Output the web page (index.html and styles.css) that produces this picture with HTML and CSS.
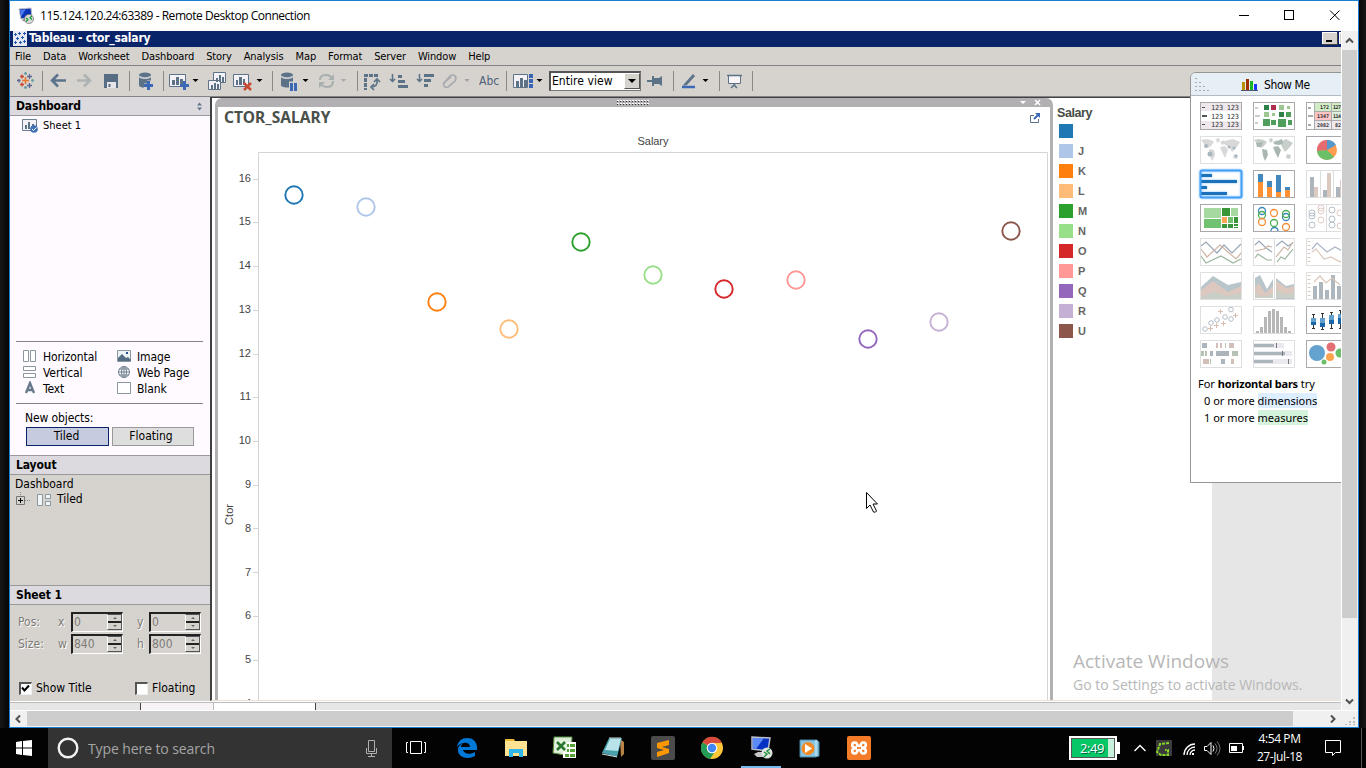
FILE: index.html
```html
<!DOCTYPE html>
<html lang="en">
<head>
<meta charset="utf-8">
<title>Remote Desktop Connection</title>
<link rel="stylesheet" href="styles.css">
</head>
<body>
<main class="desktop">
<section class="window">
  <header class="titlebar">
    <svg width="18" height="18" viewBox="18 6 18 18"><path d="M19 8l12-1 1 9-11 2z" fill="#0a32b4" stroke="#b8bcc4"/><path d="M20 9l6-1-5 8z" fill="#4a79ee"/><path d="M23 18l6 0 2 3-9-1z" fill="#999"/><circle cx="29" cy="18" r="4.600" fill="#d5d8d5" stroke="#777" stroke-width=".7"/><path d="M26 17l2 1.500-2 2M32 15l-2 1.500 2 2" stroke="#169a32" fill="none" stroke-width="1.200"/></svg>
    <h1>115.124.120.24:63389 - Remote Desktop Connection</h1>
    <svg class="winctl" width="110" height="30" viewBox="1235 1 110 30" fill="none" stroke="#000"><path d="M1239 15.500h10"/><rect x="1284.500" y="10.500" width="9" height="9"/><path d="M1330 10.500l9.500 9.500M1339.500 10.500l-9.500 9.500"/></svg>
  </header>
  <div class="viewport">
  <div class="session">
    <div class="apptitle">
      <svg width="16" height="16" viewBox="0 0 16 16"><path fill="#e8e8f4" d="M1 0h14v15H1z"/><path stroke="#245ab0" d="M2 3.500h3M3.500 2v3M6 2.500h3M7.500 1v3M11 2.500h3M12.500 1v3M4 7.500h3M5.500 6v3M9 6.500h3M10.500 5v3M2 11.500h3M3.500 10v3M7 11.500h3M8.500 10v3M11 10.500h3M12.500 9v3"/></svg>
      <b>Tableau - ctor_salary</b>
      <svg class="appmin" width="20" height="16" viewBox="1321 31 20 16"><path fill="#fff" d="M1322 32h15v12h-15zM1339 32h2v12h-2z"/><path fill="#404040" d="M1323 33h15v12h-16v-1h15z"/><path fill="#d6d3ce" d="M1323 33h14v11h-14zM1340 33h1v11h-1z"/><path fill="#000" d="M1326 40h6v2h-6z"/></svg>
    </div>
    <nav class="menu"><span>File</span><span>Data</span><span>Worksheet</span><span>Dashboard</span><span>Story</span><span>Analysis</span><span>Map</span><span>Format</span><span>Server</span><span>Window</span><span>Help</span></nav>
    <div class="toolbar">
      <svg class="sep" width="33" height="30" viewBox="10 66 33 30" fill="none" stroke-width="1.300"><path stroke="#e8762b" stroke-width="1.600" d="M22 80.500h7M25.500 77v7"/><path stroke="#c84830" d="M20 76.500h4M22 74.500v4M20 84.500h4M22 82.500v4"/><path stroke="#5c6692" d="M27 76.500h5M29.500 74v5M27 85.500h5M29.500 83v5M17 80.500h3.500M19 79v3.500"/><path stroke="#6a9ca4" d="M24 73.500h3M25.500 72v3M24 87.500h3M25.500 86v3M31 80.500h3M32.500 79v3"/></svg>
      <svg class="sep" width="87" height="30" viewBox="43 66 87 30"><path d="M58 74.500l-6 6 6 6M53 80.500h13" fill="none" stroke="#5b738c" stroke-width="2.500"/><path d="M84 74.500l6 6-6 6M77 80.500h13" fill="none" stroke="#adb2b2" stroke-width="2.500"/><path fill="#566d84" d="M104 74h14v14h-14z"/><path fill="#e8e5e8" d="M107 82h9v6h-9z"/><path fill="#566d84" d="M108.500 84h2v3h-2z"/></svg>
      <svg class="sep" width="34" height="30" viewBox="130 66 34 30"><g fill="#5c7287"><ellipse cx="145" cy="75" rx="6" ry="2.500"/><path d="M139 77.500q6 3 12 0v3h-4v3h-3v4q-4 0-5-2z"/></g><path d="M139 76.500q6 3 12 0" stroke="#bec5ce" fill="none"/><path d="M144 85.500h9M148.500 81v9" stroke="#3b69b5" stroke-width="3"/></svg>
      <svg class="sep" width="109" height="30" viewBox="164 66 109 30"><path d="M169.500 74.500h16v12h-16z" fill="#f5f2f7" stroke="#5d7389"/><path fill="#5c7287" d="M172 80h3v5h-3zM176 77h3v8h-3zM180 79h3v6h-3z"/><path d="M180 85.500h9M184.500 81v9" stroke="#3b69b5" stroke-width="3"/><path d="M192.500 79h6l-3 3z"/><g fill="#f5f2f7" stroke="#5d7389"><path d="M213.500 72.500h12v10h-12z"/><path d="M208.500 80.500h12v9h-12z"/></g><path fill="#5c7287" d="M216 78h2v4h-2zM219 75h2v7h-2zM222 77h2v5h-2zM211 85h2v4h-2zM214 83h2v6h-2zM217 84h2v5h-2z"/><path d="M233.500 74.500h15v12h-15z" fill="#f5f2f7" stroke="#5d7389"/><path fill="#5c7287" d="M236 80h2v5h-2zM239 77h3v8h-3zM243 79h2v6h-2z"/><path d="M244 83l7 7M251 83l-7 7" stroke="#c84b33" stroke-width="2.500"/><path d="M256.500 79h6l-3 3z"/></svg>
      <svg class="sep" width="85" height="30" viewBox="273 66 85 30"><g fill="#5c7287"><ellipse cx="287" cy="75" rx="6" ry="2.500"/><path d="M281 77.500q6 3 12 0v4h-4v6q-7 0-8-2z"/></g><path d="M281 76.500q6 3 12 0" stroke="#bec5ce" fill="none"/><path fill="#3b69b5" d="M290 83h3v8h-3zM294 83h3v8h-3z"/><path d="M302.500 79h6l-3 3z"/><path d="M320 80q0-5 6-5 4 0 6 3M333 81q0 6-6 6-4 0-6-3" stroke="#aaafb0" stroke-width="2.200" fill="none"/><path fill="#aaafb0" d="M334 74v6h-6zM319 88v-6h6zM340.500 79h6l-3 3z"/></svg>
      <svg width="121" height="30" viewBox="358 66 121 30"><g fill="none" stroke="#5c7287"><path d="M364 75.500h15M365.500 78v12" stroke-width="3" stroke-dasharray="4 1"/><path d="M371 87q7 0 6-7M374 82l3-3 3 3M374 84l-3 3 3 3" stroke-width="1.700"/><path d="M392.500 74v7M390 79l2.500 2.500 2.500-2.500M419.500 74v7M417 79l2.500 2.500 2.500-2.500" stroke-width="1.500"/></g><path fill="#5c7287" d="M398 75h4v3h-4zM398 80h7v3h-7zM398 85h10v3h-10zM424 74h10v3h-10zM424 79h7v3h-7zM424 84h4v3h-4z"/><path d="M443 84l7-8q3-2 5 0t0 5l-7 6q-3 1-4-1t1-4l6-5" stroke="#a5a9ad" stroke-width="1.600" fill="none"/><path d="M464.500 79h5l-2.500 3z" fill="#9da0a2"/></svg>
      <span class="abc sep">Abc</span>
      <svg width="42" height="30" viewBox="507 66 42 30"><path d="M513.500 74.500h14v13h-14z" fill="#f5f2f7" stroke="#5d7389"/><path fill="#5c7287" d="M516 81h3v6h-3zM520 78h3v9h-3zM524 80h3v7h-3z"/><path d="M531 74v15" stroke="#3866b4" stroke-width="4" stroke-dasharray="4 1"/><path d="M536.500 79h6l-3 3z"/></svg>
      <span class="select"><span>Entire view</span><i></i></span>
      <svg class="sep" width="33" height="30" viewBox="641 66 33 30"><path fill="#5c7287" d="M647 80h6v2h-6zM652 76h2v10h-2zM654 78h5l3-2v10l-3-2h-5z"/></svg>
      <svg class="sep" width="46" height="30" viewBox="674 66 46 30"><path d="M684 84l9-10 2 2-8 9-4 1z" fill="#5c7287"/><path d="M682 87h13" stroke="#3b69b5" stroke-width="2.500"/><path d="M702.500 79h6l-3 3z"/></svg>
      <svg class="sep" width="33" height="30" viewBox="720 66 33 30"><path d="M728.500 75.500h12v8h-12z" fill="#f8f4f8" stroke="#5c7287"/><path d="M727 75.500h15M734.500 84v2M731 88l3-3 3 3" fill="none" stroke="#5c7287" stroke-width="1.500"/></svg>
    </div>
    <div class="work">
      <aside class="side">
        <h2>Dashboard<svg width="7" height="9" viewBox="0 0 7 9"><path fill="#61758a" d="M1 3.500l2.500-3 2.500 3zM1 5.500l2.500 3 2.500-3z"/></svg></h2>
        <div class="sheets"><svg width="18" height="16" viewBox="21 117 18 16"><path d="M22.500 118.500h14v11h-14z" fill="#f5f2f7" stroke="#6a7d90"/><path fill="#5c7287" d="M25 124h2v4h-2zM28 121h2v7h-2zM32 123h2v4h-2z"/><circle cx="34" cy="128" r="3.800" fill="#4070b5"/><path d="M32 128l1.500 1.500 3-3" stroke="#fff" fill="none"/></svg><span>Sheet 1</span></div>
        <div class="objects">
          <div><svg viewBox="0 0 16 16"><path d="M1.500 1.500h5v11h-5zM8.500 1.500h5v11h-5z" fill="#fff" stroke="#8b979f"/></svg>Horizontal</div><div><svg viewBox="0 0 16 16"><path d="M1.500 1.500h13v11h-13z" fill="#edf2f5" stroke="#8b979f"/><path d="M2 12V9l4-4 4 4 2-1 3 3v1z" fill="#536d82"/><path fill="#234f91" d="M10 3h2v2h-2z"/></svg>Image</div>
          <div><svg viewBox="0 0 16 16"><path d="M1.500 1.500h12v4h-12zM1.500 8.500h12v4h-12z" fill="#fff" stroke="#8b979f"/></svg>Vertical</div><div><svg viewBox="0 0 16 16"><g fill="none" stroke="#71828f"><circle cx="8" cy="7" r="5.500"/><ellipse cx="8" cy="7" rx="2.500" ry="5.500"/><path d="M2 7h12M8 1v12M3 4h10M3 10h10"/></g></svg>Web Page</div>
          <div><svg viewBox="0 0 16 16"><path d="M4 12L8 2l4 10M5.500 9h5" fill="none" stroke="#65788a" stroke-width="2.300"/></svg>Text</div><div><svg viewBox="0 0 16 16"><path d="M1.500 1.500h13v11h-13z" fill="#fff" stroke="#8b979f"/></svg>Blank</div>
        </div>
        <div class="newobj"><p>New objects:</p><div><span class="on">Tiled</span><span>Floating</span></div></div>
        <h2>Layout</h2>
        <div class="tree"><div>Dashboard</div><div class="branch"><svg width="42" height="16" viewBox="15 490 42 16"><path d="M20.500 490v4M25 498.500h6" stroke="#888" stroke-dasharray="1 1"/><path d="M16.500 494.500h8v8h-8z" fill="none" stroke="#777"/><path d="M18 498.500h5M20.500 496v5" stroke="#000"/><path d="M37.500 492.500h5v11h-5zM45.500 492.500h5v4h-5zM45.500 499.500h5v4h-5z" fill="#f3f6f7" stroke="#8b979f"/></svg>Tiled</div></div>
        <h2>Sheet 1</h2>
        <div class="form">
          <div class="row"><label>Pos:</label><em>x</em><span class="spin">0<i></i></span><em class="two">y</em><span class="spin">0<i></i></span></div>
          <div class="row"><label>Size:</label><em>w</em><span class="spin">840<i></i></span><em class="two">h</em><span class="spin">800<i></i></span></div>
          <div class="checks"><span class="box"><svg width="9" height="9" viewBox="0 0 9 9"><path d="M1 3.500l2.500 3 4.500-5" stroke="#000" stroke-width="2" fill="none"/></svg></span><span class="st">Show Title</span><span class="box"></span><span>Floating</span></div>
        </div>
      </aside>
      <div class="canvas">
        <section class="zone">
          <div class="grip"><svg width="836" height="9" viewBox="215 98 836 9"><path d="M617 100.500h32M617 103.500h32" stroke="#fff" stroke-dasharray="2 1"/><path d="M617 101.500h32M617 104.500h32" stroke="#333" stroke-dasharray="1 2"/><path fill="#fff" d="M1020 101h6l-3 3z"/><path d="M1035 100l5 5M1040 100l-5 5" stroke="#fff" stroke-width="1.500"/></svg></div>
          <div class="chart">
            <div class="charthead"><h3>CTOR_SALARY</h3><svg width="12" height="13" viewBox="1029 112 12 13"><path d="M1034 115.500h-3.500v7h8V119" fill="none" stroke="#5c7287"/><path d="M1034 119l5-5" stroke="#3b69b5" stroke-width="2"/><path fill="#3b69b5" d="M1035 113h5v5z"/></svg></div>
            <svg class="plot" width="832" height="571" viewBox="218 129 832 571">
              <path d="M258.500 700V152.500h789V700" fill="none" stroke="#d5d5d5"/>
              <path stroke="#d5d5d5" d="M253 179.500h5M253 222.500h5M253 266.500h5M253 310.500h5M253 354.500h5M253 397.500h5M253 441.500h5M253 485.500h5M253 528.500h5M253 572.500h5M253 616.500h5M253 660.500h5"/>
              <g class="tick"><text x="637.500" y="145" textLength="31" text-anchor="start">Salary</text>
              <g text-anchor="end"><text x="251" y="182">16</text><text x="251" y="225">15</text><text x="251" y="269">14</text><text x="251" y="313">13</text><text x="251" y="357">12</text><text x="251" y="400">11</text><text x="251" y="444">10</text><text x="251" y="488">9</text><text x="251" y="532">8</text><text x="251" y="576">7</text><text x="251" y="619">6</text><text x="251" y="663">5</text><text x="251" y="707">4</text></g>
              <text x="0" y="0" transform="translate(233 525) rotate(-90)" textLength="21">Ctor</text></g>
              <g fill="none" stroke-width="1.900"><circle cx="294" cy="195" r="8.700" stroke="#1f77b4"/><circle cx="366" cy="207" r="8.700" stroke="#aec7e8"/><circle cx="437" cy="302" r="8.700" stroke="#ff7f0e"/><circle cx="509" cy="329" r="8.700" stroke="#ffbb78"/><circle cx="581" cy="242" r="8.700" stroke="#2ca02c"/><circle cx="653" cy="275" r="8.700" stroke="#98df8a"/><circle cx="724" cy="289" r="8.700" stroke="#d62728"/><circle cx="796" cy="280" r="8.700" stroke="#ff9896"/><circle cx="868" cy="339" r="8.700" stroke="#9467bd"/><circle cx="939" cy="322" r="8.700" stroke="#c5b0d5"/><circle cx="1011" cy="231" r="8.700" stroke="#8c564b"/></g>
              <path d="M866.500 492.500v16l3.500-3.500 3.500 7q2 1 3-1l-3.500-7h4.500z" fill="#fff" stroke="#000"/>
            </svg>
          </div>
        </section>
        <section class="legend"><h4>Salary</h4>
          <div><i class="k1"></i></div><div><i class="k2"></i>J</div><div><i class="k3"></i>K</div><div><i class="k4"></i>L</div><div><i class="k5"></i>M</div><div><i class="k6"></i>N</div><div><i class="k7"></i>O</div><div><i class="k8"></i>P</div><div><i class="k9"></i>Q</div><div><i class="k10"></i>R</div><div><i class="k11"></i>U</div>
        </section>
        <div class="outside"></div>
      </div>
    </div>
    <div class="tabs"><i class="t1"></i><i class="t2"></i><i class="t3"></i></div>

    <section class="showme">
      <header><svg width="70" height="22" viewBox="1191 73 70 22"><path stroke="#aaa" stroke-dasharray="2 2" d="M1195 78.500h2M1195 82.500h6M1195 86.500h10M1195 90.500h14"/><path fill="#b89000" d="M1242 82h3v8h-3z"/><path fill="#a03000" d="M1246 79h3v11h-3z"/><path fill="#18b428" d="M1250 81h3v9h-3z"/><path fill="#1838ff" d="M1254 84h3v6h-3z"/><path stroke="#557" d="M1241 90.500h17"/></svg><span>Show Me</span></header>
      <div class="thumbs">
        <svg viewBox="0 0 42 28"><path fill="#eee8ee" d="M1 1h40v8H1zM1 19h40v8H1z"/><path fill="#555" d="M2 5h3v1H2zM2 13h5v2H2zM2 22h3v1H2z"/><g class="digits" font-size="7"><text x="11" y="8" textLength="28">123 123</text><text x="11" y="17" textLength="28">123 123</text><text x="11" y="25" textLength="28">123 123</text></g><rect class="bd" x=".5" y=".5" width="41" height="27"/></svg>
        <svg viewBox="0 0 42 28"><path fill="#ccc" d="M2 5h3v2H2zM2 13h5v2H2zM2 20h3v2H2z"/><path fill="#2c8048" d="M11 3h5v5h-5zM26 10h5v5h-5z"/><path fill="#b02e4e" d="M18 3h5v5h-5z"/><path fill="#9cc790" d="M26 3h5v5h-5zM34 4h3v3h-3zM11 10h5v5h-5zM19 11h3v3h-3z"/><path fill="#4f9e5b" d="M33 10h5v5h-5zM10 17h7v7h-7zM18 18h5v5h-5zM25 17h8v8h-8zM35 18h4v5h-4z"/><rect class="bd" x=".5" y=".5" width="41" height="27"/></svg>
        <svg viewBox="0 0 42 28"><path fill="#d2ecc6" d="M9 1h33v8H9z"/><path fill="#ffc5c6" d="M9 10h16v8H9z"/><path fill="#def0dd" d="M26 10h16v8H26z"/><path fill="#eee8ee" d="M9 19h33v8H9z"/><path fill="#aaa" d="M2 5h3v2H2zM2 13h5v2H2zM2 22h3v2H2z"/><path stroke="#aaa" d="M8.500 0v28M25.500 0v28M9 9.500h33M9 18.500h33"/><g class="digits bold" font-size="5"><text x="14" y="7">172</text><text x="27" y="7" textLength="8">127</text><text x="11" y="16">1347</text><text x="27" y="16" textLength="8">114</text><text x="11" y="25">2082</text><text x="29" y="25">82</text></g><rect class="bd" x=".5" y=".5" width="41" height="27"/></svg>
        <svg viewBox="0 0 42 28"><g fill="#d6d9d7"><path d="M1 4l5-1 5 1 3 2-3 4-3 2-4-4zM9 13l5 1 1 5-3 6-2-5zM16 3l3-1 1 3-3 2zM20 6l4-2 2 3-4 2zM20 11l5-1 3 4-3 8-3-6zM25 5l8-2 7 3-3 5-5 5-3-5-5-3zM34 18l4 1-1 4-4-1z"/></g><g fill="#a7b6bf"><circle cx="6" cy="10" r="2"/><circle cx="10" cy="18" r="2.500"/><circle cx="29" cy="11" r="1.500"/><circle cx="34" cy="12" r="1.500"/><circle cx="36" cy="20" r="1.500"/></g><rect class="bd off" x=".5" y=".5" width="41" height="27"/></svg>
        <svg viewBox="0 0 42 28"><path fill="#c8cfca" d="M1 4l5-1 5 1 3 2-3 4-3 2-4-4zM16 3l3-1 1 3-3 2zM20 6l4-2 2 3-4 2zM27 6l6-3 7 4-3 4-5 5-3-5zM34 18l4 1-1 4-4-1z"/><path fill="#aab6b0" d="M3 7l7-1-2 5-4 0zM9 13l5 1 1 5-3 6-2-5zM20 11l5-1 3 4-3 8-3-6zM20 7l9-4 1 5-5 1z"/><rect class="bd off" x=".5" y=".5" width="41" height="27"/></svg>
        <svg viewBox="0 0 42 28"><circle cx="21" cy="14" r="10" fill="#ff9c50"/><path fill="#5697c9" d="M21 14V4a10 10 0 0 1 9 5z"/><path fill="#e66b70" d="M21 14l-10 1A10 10 0 0 1 21 4z"/><path fill="#6cbf69" d="M21 14l7 7a10 10 0 0 1-17-6z"/><rect class="bd" x=".5" y=".5" width="41" height="27"/></svg>
        <svg class="sel" viewBox="0 0 42 28"><path fill="#1b72b8" d="M1 4h11v3H1zM1 10h36v3H1zM1 16h6v3H1zM1 22h26v3H1z"/><rect x=".5" y=".5" width="41" height="27" rx="1.500" fill="none" stroke="#459ff5" stroke-width="2"/></svg>
        <svg viewBox="0 0 42 28"><path fill="#4288bd" d="M5 4h5v8H5zM14 11h5v6h-5zM23 5h5v17h-5zM32 17h5v3h-5z"/><path fill="#ff9132" d="M5 12h5v15H5zM14 17h5v10h-5zM23 22h5v5h-5zM32 20h5v7h-5z"/><rect class="bd" x=".5" y=".5" width="41" height="27"/></svg>
        <svg viewBox="0 0 42 28"><path fill="#adb5bc" d="M4 7h4v20H4zM17 20h4v7h-4zM30 17h4v10h-4z"/><path fill="#dccac0" d="M8 17h4v10H8zM21 3h4v24h-4zM34 10h4v17h-4z"/><path stroke="#ddd" d="M14.500 0v28M27.500 0v28"/><rect class="bd off" x=".5" y=".5" width="41" height="27"/></svg>
        <svg viewBox="0 0 42 28"><path fill="#a6d9a0" d="M4 4h17v10H4z"/><path fill="#71c270" d="M4 15h17v9H4zM28 13h5v6h-5z"/><path fill="#389538" d="M22 4h8v8h-8zM22 20h5v4h-5zM28 20h5v4h-5zM34 13h4v6h-4zM34 20h4v2h-4zM34 23h4v1h-4z"/><path fill="#a6d9a0" d="M31 4h7v8h-7z"/><path fill="#ffa553" d="M22 13h5v6h-5z"/><rect class="bd" x=".5" y=".5" width="41" height="27"/></svg>
        <svg viewBox="0 0 42 28"><g fill="none" stroke-width="1.300"><g stroke="#3988bd"><circle cx="9" cy="7" r="3.500"/><circle cx="33" cy="13" r="3.500"/><path d="M18 27a3.500 3.500 0 0 1 7 0"/></g><g stroke="#4cae52"><circle cx="9" cy="11" r="3.500"/><circle cx="33" cy="10" r="3.500"/><circle cx="21" cy="19" r="3.500"/></g><g stroke="#f58d36"><circle cx="21" cy="9" r="3.500"/><circle cx="9" cy="18" r="3.500"/><circle cx="33" cy="23" r="3.500"/></g></g><rect class="bd" x=".5" y=".5" width="41" height="27"/></svg>
        <svg viewBox="0 0 42 28"><g fill="none" stroke="#b5bfc9"><circle cx="6" cy="9" r="3"/><circle cx="6" cy="12" r="3"/><circle cx="6" cy="21" r="3"/><circle cx="26" cy="6" r="3"/><circle cx="26" cy="15" r="3"/><circle cx="26" cy="21" r="3"/></g><g fill="none" stroke="#dfcac4"><circle cx="15" cy="4" r="3"/><circle cx="15" cy="7" r="3"/><circle cx="15" cy="16" r="3"/><circle cx="34" cy="9" r="3"/><circle cx="34" cy="22" r="3"/></g><path stroke="#ddd" d="M20.500 0v28"/><rect class="bd off" x=".5" y=".5" width="41" height="27"/></svg>
        <svg viewBox="0 0 42 28"><g class="line"><path stroke="#9ba8b5" d="M1 8l5-4 11 11 7-8 8 8 9-9"/><path stroke="#cdb4a4" d="M1 11l6 8 13-12 16 14 6-7"/><path stroke="#9ab49c" d="M1 18l5 7 15-7 12 7 8-4"/></g><rect class="bd off" x=".5" y=".5" width="41" height="27"/></svg>
        <svg viewBox="0 0 42 28"><g class="line"><path stroke="#9ba8b5" d="M2 7l4-4 7 7 6 4M23 8l6-5 6 5 5-3"/><path stroke="#cdb4a4" d="M2 13l9-2 4-3 4 1M23 19l8-10 4 3 5-8"/><path stroke="#9ab49c" d="M2 20l3-4 9 6 5 0M24 24l4-5 4 2 8-10"/></g><path stroke="#ddd" d="M21.500 0v28"/><rect class="bd off" x=".5" y=".5" width="41" height="27"/></svg>
        <svg viewBox="0 0 42 28"><g class="line"><path stroke="#aab5c7" d="M6 11l5-6 10 9 8-5 11 6"/><path stroke="#dbc7ba" d="M6 14l4-3 8 10 7-2 9 5 8-7"/></g><path stroke="#dccac5" stroke-dasharray="1 3" stroke-width="3" d="M3 3v22"/><rect class="bd off" x=".5" y=".5" width="41" height="27"/></svg>
        <svg viewBox="0 0 42 28"><path fill="#b8c5cb" d="M1 15L13 4l15 9 13-3v17H1z"/><path fill="#dcc8bf" d="M1 18l12-9 15 11 13-6v13H1z"/><path fill="#c9cec6" d="M1 25l13-5 14 4 13-3v6H1z"/><rect class="bd off" x=".5" y=".5" width="41" height="27"/></svg>
        <svg viewBox="0 0 42 28"><path fill="#b8c5cb" d="M2 6l5-3 7 14 6-10v19H2zM23 6l10 8 8-2v15H23z"/><path fill="#dcc8bf" d="M2 15l4-4 6 10 8-7v12H2zM23 9l11 7 7-2v12H23z"/><path fill="#c9cec6" d="M2 21l6 4 12-3v4H2zM23 18l9 4 9-1v5H23z"/><path stroke="#ddd" d="M21.500 0v28"/><rect class="bd off" x=".5" y=".5" width="41" height="27"/></svg>
        <svg viewBox="0 0 42 28"><path fill="#adb7bd" d="M7 14h4v13H7zM13 10h4v17h-4zM19 18h4v9h-4zM25 3h4v24h-4zM31 14h4v13h-4z"/><path class="line" stroke="#dbc7ba" d="M8 10l6-6 6 7 6-5 8 7"/><path stroke="#dccac5" stroke-dasharray="1 3" stroke-width="3" d="M3 3v22"/><rect class="bd off" x=".5" y=".5" width="41" height="27"/></svg>
        <svg viewBox="0 0 42 28"><g fill="none" stroke="#b4bdc8"><circle cx="5" cy="23" r="2.300"/><circle cx="11" cy="17" r="2.300"/><circle cx="17" cy="14" r="2.300"/><circle cx="25" cy="11" r="2.300"/><circle cx="31" cy="13" r="2.300"/><circle cx="31" cy="3.500" r="2.300"/></g><path stroke="#d9bdae" d="M8 22.500h5M10.500 20v5M14 19.500h5M16.500 17v5M21 17.500h5M23.500 15v5M18 5.500h5M20.500 3v5M33 9.500h5M35.500 7v5"/><rect class="bd off" x=".5" y=".5" width="41" height="27"/></svg>
        <svg viewBox="0 0 42 28"><path fill="#b7b7b7" d="M3 25h3v2H3zM7 21h3v6H7zM11 11h3v16h-3zM15 5h3v22h-3zM19 3h3v24h-3zM23 5h3v22h-3zM27 11h3v16h-3zM31 21h3v6h-3zM35 25h3v2h-3z"/><rect class="bd off" x=".5" y=".5" width="41" height="27"/></svg>
        <svg viewBox="0 0 42 28"><path stroke="#333" d="M7.500 8v15M6 8.500h3M6 22.500h3M16.500 7v17M15 7.500h3M15 23.500h3M25.500 6v16M24 6.500h3M24 22.500h3M34.500 4v19M33 4.500h3M33 22.500h3"/><path fill="#63a0ce" d="M5 12h5v4H5zM14 12h5v5h-5zM23 9h5v5h-5zM32 8h5v4h-5z"/><path fill="#1b67a9" d="M5 16h5v3H5zM14 17h5v4h-5zM23 14h5v4h-5zM32 12h5v6h-5z"/><rect class="bd" x=".5" y=".5" width="41" height="27"/></svg>
        <svg viewBox="0 0 42 28"><path fill="#adb5bc" d="M2 3h5v5H2zM10 11h3v5h-3zM16 11h13v5H16zM21 19h4v5h-4z"/><path fill="#d3bfba" d="M16 3h2v5h-2zM20 3h2v5h-2zM3 19h6v5H3zM31 19h3v5h-3zM29 3h5v5h-5z"/><path fill="#b6c2b3" d="M1 11h3v5H1zM5 11h2v5H5zM32 11h6v5h-6zM25 3h1v5h-1zM10 19h1v5h-1z"/><rect class="bd off" x=".5" y=".5" width="41" height="27"/></svg>
        <svg viewBox="0 0 42 28"><path fill="#e9e9ef" d="M1 3h30v5H1zM1 11h38v5H1zM1 19h38v5H1z"/><path fill="#adb5bc" d="M1 4h20v3H1zM1 12h31v3H1zM1 20h19v3H1z"/><path stroke="#777" d="M23.500 3v5M29.500 11v5M35.500 19v5"/><rect class="bd off" x=".5" y=".5" width="41" height="27"/></svg>
        <svg viewBox="0 0 42 28"><circle cx="11" cy="13" r="8" fill="#64a2cf"/><circle cx="25" cy="7" r="4.500" fill="#e26f73"/><circle cx="24" cy="17" r="4" fill="#ffa24e"/><circle cx="18" cy="22" r="2.500" fill="#6cbf69"/><circle cx="34" cy="13" r="4.500" fill="#6cbf69"/><rect class="bd" x=".5" y=".5" width="41" height="27"/></svg>
      </div>
      <div class="hint"><p>For <b>horizontal bars</b> try</p><p class="in">0 or more <mark class="dim">dimensions</mark></p><p class="in">1 or more <mark class="mea">measures</mark></p></div>
    </section>
    <div class="activate"><p>Activate Windows</p><small>Go to Settings to activate Windows.</small></div>
  </div>
  <div class="vscroll"><svg width="17" height="19" viewBox="0 0 17 19"><path d="M4 11.500l3.500-3.500 3.500 3.500" fill="none" stroke="#505050" stroke-width="2"/></svg><div class="vthumb"></div><svg class="down" width="17" height="17" viewBox="0 0 17 17"><path d="M4 6.500l3.500 3.500L11 6.500" fill="none" stroke="#505050" stroke-width="2"/></svg></div>
  </div>
  <div class="hscroll"><svg width="17" height="16" viewBox="0 0 17 16"><path d="M10 4.500L6.500 8l3.500 3.500" fill="none" stroke="#505050" stroke-width="2"/></svg><div class="hthumb"></div><svg class="end" width="65" height="16" viewBox="1293 711 65 16"><path d="M1331 715.500l3.500 3.500-3.500 3.500" fill="none" stroke="#505050" stroke-width="2"/><path fill="#bbb" d="M1353 717h2v2h-2zM1349 721h2v2h-2zM1353 721h2v2h-2zM1345 724h2v1h-2zM1349 724h2v1h-2zM1353 724h2v1h-2z"/></svg></div>
</section>
<footer class="taskbar">
  <svg width="48" height="40" viewBox="0 728 48 40"><path fill="#fff" d="M16 742l6-1v6.500h-6zM23 741l9-1v7.500h-9zM16 748.500h6v6.500l-6-1zM23 748.500h9v7.500l-9-1z"/></svg>
  <div class="search"><svg width="40" height="40" viewBox="48 728 40 40"><circle cx="68" cy="748" r="9.300" fill="none" stroke="#f2f2f2" stroke-width="2.400"/></svg><span>Type here to search</span><svg class="mic" width="40" height="40" viewBox="352 728 40 40"><path fill="none" stroke="#b0b0b0" d="M368.500 740.500h6v11h-6zM366.500 748v5.500h10V748M371.500 754v2M368 756.500h7"/></svg></div>
  <div class="apps">
    <svg viewBox="392 728 49 40"><path d="M410.500 741.500h11v12h-11zM408 742.500h-1.500v10h1.500M424 742.500h1.500v10H424" fill="none" stroke="#fff"/></svg>
    <svg viewBox="441 728 49 40"><path fill="#0078d7" d="M457 747c1-6 5-9 10-9 7 0 10 5 10 9v3h-14c1 4 7 5 12 2v4c-7 4-17 2-17-6 0-4 3-6 6-7-2 1-3 2-3 4h9c0-5-8-6-13 0z"/></svg>
    <svg viewBox="490 728 49 40"><path fill="#e8b936" d="M505 739h9l1 2h11v3h-21z"/><path fill="#ffe391" d="M505 741h22v15h-22z"/><path fill="#31b5ea" d="M509 749h14v8h-4v-4h-6v4h-4z"/></svg>
    <svg viewBox="539 728 49 40"><path fill="#dcebd5" stroke="#55913f" d="M554 737h18l-1 19-18-3z"/><path fill="#fff" d="M563 742h13v16h-13z"/><path fill="#56a239" d="M565 744h4v3h-4zM570 744h5v3h-5zM565 749h4v3h-4zM570 749h5v3h-5zM565 754h4v3h-4zM570 754h5v3h-5z"/><path fill="#e3f2dd" d="M555 740h12v12h-12z"/><path d="M557 742l8 8M565 742l-8 8" stroke="#28762e" stroke-width="2.500"/></svg>
    <svg viewBox="588 728 49 40"><path fill="#b88346" d="M620 739l4 3v12l-3 3z"/><path fill="#4a9fad" d="M609 738h13l-5 19-15-4z"/><path fill="#b8e4e9" d="M610 739h11l-3 12-13-1z"/><path stroke="#d4d9d9" fill="none" d="M609 738h12M602 754l15 3"/></svg>
    <svg viewBox="637 728 49 40"><rect x="651" y="736" width="24" height="24" rx="2" fill="#4b4b4b"/><path fill="#ff9800" d="M657 743l12-3v5l-7 2 7 2v4l-12 4v-5l7-2-7-2z"/></svg>
    <svg viewBox="686 728 49 40"><circle cx="712" cy="748" r="11" fill="#fbc638"/><path fill="#d94a3a" d="M712 748L702.500 742.500A11 11 0 0 1 722 743H712z"/><path fill="#249b56" d="M712 748l-9.500-5.500A11 11 0 0 0 710 759l6-9z"/><circle cx="712" cy="748" r="5.300" fill="#fff"/><circle cx="712" cy="748" r="4.200" fill="#4285f4"/></svg>
    <svg viewBox="735 728 49 40"><path fill="#0731c3" stroke="#b9bdcc" stroke-width="1.500" d="M752 737l18 1-2 13-16-2z"/><path fill="#5c8bf6" d="M753 738l11 0-8 11-3-1z"/><path fill="#c7c7c7" d="M758 752h6l3 5h-10l-3-3z"/><circle cx="767" cy="753" r="5.500" fill="#e0e5df"/><path d="M764 752l3 2-3 3M770 749l-3 2 3 3" stroke="#168b35" fill="none" stroke-width="1.300"/><path fill="#77b9ee" d="M741 766h40v2h-40z"/></svg>
    <svg viewBox="784 728 49 40"><path fill="#88c3df" stroke="#4687a6" d="M800 740h17l2 2v14l-3 1h-16z"/><path d="M816 740v16" stroke="#d2f0fa"/><circle cx="808" cy="748.500" r="6.500" fill="#f58a22"/><path fill="#fff" d="M805 744l7 4.500-7 4.500z"/></svg>
    <svg viewBox="833 728 49 40"><rect x="847" y="736" width="24" height="24" rx="2" fill="#f47c28"/><g fill="none" stroke="#fff" stroke-width="2.600"><path d="M857 747.500h-2.500a2.500 2.500 0 1 1 2.500-3.500q0 2 2 2t2-2a2.500 2.500 0 1 1 2.500 3.500H861M857 748.500h-2.500a2.500 2.500 0 1 0 2.500 3.500q0-2 2-2t2 2a2.500 2.500 0 1 0 2.500-3.500H861"/></g></svg>
  </div>
  <div class="tray">
    <div class="batt"><span>2:49</span></div>
    <svg width="124" height="40" viewBox="1121 728 124 40"><path d="M1134.500 751l5.500-5.500 5.500 5.500" fill="none" stroke="#fff" stroke-width="1.400"/><path fill="#3b3b3b" d="M1156 740h16v16h-16z"/><path d="M1169 743l-9 1-3 8 4 3h7v-5h-3" fill="none" stroke="#86d625" stroke-width="2" stroke-dasharray="3 1"/><g fill="none" stroke="#fff"><path d="M1184 755a11 11 0 0 1 11-11" stroke-width="1.300"/><path d="M1187 755a8 8 0 0 1 8-8M1190 755a5 5 0 0 1 5-5" stroke-width="1.300"/><path d="M1204.500 746.500h2.500l4-4v12l-4-4h-2.500zM1213 745.500q2 3 0 6"/><path d="M1215 743.500q4 5 0 10M1217 741.500q6 7 0 14" stroke="#777"/><path d="M1229.500 743.500h13v9h-13z"/></g><path fill="#fff" d="M1231 746h6v5h-6zM1243 746h1v4h-1zM1192 753h2v2h-2z"/></svg>
    <div class="clock"><span>4:54 PM</span><span>27-Jul-18</span></div>
    <svg width="48" height="40" viewBox="1318 728 48 40"><path d="M1325.500 740.500h15v12h-5l-3 3v-3h-7z" fill="none" stroke="#fff"/><path stroke="#555" d="M1361.500 728v40"/></svg>
  </div>
</footer>
</main>
</body>
</html>
```
FILE: styles.css
```css
*{box-sizing:border-box}
body,h1,h2,h3,h4,p{margin:0}
body{width:1366px;height:768px;overflow:hidden;background:#0b0b0b}
svg{display:block;flex:none}
i,em{font-style:normal}
.desktop{width:1366px;height:768px;background:linear-gradient(90deg,#171717,#050505 9px,#080808 1359px,#171717);display:flex;flex-direction:column;font-family:"DejaVu Sans Condensed","DejaVu Sans",sans-serif;font-stretch:condensed;font-size:12px;color:#000}
.window{width:1350px;height:728px;margin-left:9px;border:1px solid #1b7fd1;background:#fff;display:flex;flex-direction:column}
.titlebar{height:30px;display:flex;align-items:center;padding-left:8px}
.titlebar h1{font:400 12px/28px "Open Sans","Noto Sans",sans-serif;margin-left:4px;white-space:nowrap;letter-spacing:-.47px}
.winctl{margin-left:auto;margin-right:13px}
.viewport{display:flex;height:680px}
.session{width:1331px;height:679px;position:relative;overflow:hidden;background:#d6d3ce}
.apptitle{height:16px;background:#0a246a;color:#fff;display:flex;align-items:center}
.apptitle svg:first-child{margin-left:2px}
.apptitle b{font-size:12px;line-height:14px;margin:-2px 0 0 1px;letter-spacing:-.2px;white-space:nowrap}
.appmin{margin-left:auto}
.menu{height:19px;border-bottom:1px solid #848284;display:flex;gap:12px;padding-left:5px;font-size:11px;line-height:20px;letter-spacing:-.12px}
.toolbar{height:30px;display:flex;align-items:center}
.sep{background:linear-gradient(#8a8885,#8a8885) 100% 5px/1px 20px no-repeat}
.abc{width:28px;height:30px;font-size:12px;line-height:30px;color:#4d617a}
.select{width:92px;height:20px;border:1px solid #777;border-top:2px solid #555;border-left:2px solid #555;background:#fff;display:flex;justify-content:space-between;font-size:12px;line-height:17px;padding-left:1px;letter-spacing:.05px;white-space:nowrap}
.select i{width:16px;height:16px;background:#d6d3ce;border:1px solid #555;border-left-color:#fff;border-top-color:#fff;display:flex;align-items:center;justify-content:center}
.select i::after{content:"";border:4px solid transparent;border-top-color:#000;border-bottom:0}
.work{height:605px;display:flex;border-top:1px solid #848284}
.side{width:200px;background:#d6d3ce;display:flex;flex-direction:column}
.side h2{font-size:12px;line-height:18px;height:19px;background:#dcdade;border-bottom:1px solid #999;padding:0 7px 0 6px;display:flex;align-items:center;justify-content:space-between;letter-spacing:-.1px}
.sheets{height:225px;background:#fefaff;display:flex;align-items:flex-start;padding:2px 0 0 11px;line-height:16px;font-size:11px}
.sheets span{margin-left:4px}
.objects{height:63px;background:#fefaff;border:solid #fefaff;border-width:0 7px 0 6px;box-shadow:inset 0 1px #848284,inset 0 -1px #848284;display:grid;grid-template-columns:94px 1fr;grid-template-rows:repeat(3,16px);padding:8px 0 0 6px;line-height:16px;letter-spacing:-.1px}
.objects div{display:flex}
.objects svg{width:16px;height:16px;margin-right:5px}
.newobj{height:52px;background:#fefaff;border-bottom:1px solid #999;padding:6px 0 0 15px}
.newobj p{line-height:16px;height:17px;letter-spacing:-.1px}
.newobj div{display:flex;gap:3px;padding-left:1px}
.newobj span{width:82px;height:19px;border:1px solid #999;background:#dedede;text-align:center;line-height:17px;padding-right:4px}
.newobj .on{width:83px;border-color:#0a246a;background:#c6cbdf;padding-right:2px}
.side .newobj+h2{line-height:20px}
.tree{height:111px;padding:1px 0 0 5px;line-height:16px;border-bottom:1px solid #999}
.branch{display:flex;line-height:15px}
.form{flex:1;padding:6px 0 0 8px;color:#7d7b78}
.row{display:flex;align-items:center;height:22px}
.row label{width:40px;text-shadow:1px 1px #fff}
.row em{width:13px;text-shadow:1px 1px #fff}
.row .two{width:12px;margin-left:14px}
.spin{width:52px;height:20px;border:2px solid #222;border-right:1px solid #fff;border-bottom:1px solid #fff;display:flex;justify-content:space-between;line-height:17px;padding-left:1px}
.spin i{width:15px;height:16px;border:1px solid #555;border-left-color:#fff;background:linear-gradient(#d6d3ce 6px,#222 6px,#222 8px,#d6d3ce 8px);display:flex;flex-direction:column;justify-content:space-between;align-items:center}
.spin i::before{content:"";border:2px solid transparent;border-bottom-color:#666;border-top:0;margin-top:2px}
.spin i::after{content:"";border:2px solid transparent;border-top-color:#666;border-bottom:0;margin-bottom:2px}
.checks{display:flex;align-items:center;margin-top:24px;color:#000;height:18px;padding-left:1px}
.box{width:13px;height:13px;background:#fff;border:1px solid #eee;border-top:2px solid #555;border-left:2px solid #555;margin-right:4px}
.st{width:99px}
.canvas{flex:1;background:#fff;border-left:2px solid #404040;border-top:1px solid #404040;display:flex;padding-left:3px;border-bottom:1px solid #e9e1d5}
.zone{width:838px;background:#b3b0b3;border-radius:7px 7px 0 0}
.grip{height:9px}
.chart{margin:0 3px;background:#fff}
.charthead{height:22px;display:flex;justify-content:space-between;padding:5px 9px 0 6px}
.charthead h3{font:700 15.500px/10px "Noto Sans","Open Sans",sans-serif;color:#4a504a;letter-spacing:.05px}
.plot{height:571px}
.tick{font:11px "Liberation Sans",Arial,sans-serif;fill:#444}
.legend{width:159px;padding:8px 0 0 6px;font:700 11px/20px "Liberation Sans",Arial,sans-serif;color:#666}
.legend h4{font:700 12.500px/14px "Liberation Sans",Arial,sans-serif;color:#464c46;height:15px;margin-left:-2px;letter-spacing:-.4px}
.legend div{display:flex;height:20px;align-items:center}
.legend i{width:14px;height:14px;margin-right:5px}
.k1{background:#1f77b4}.k2{background:#aec7e8}.k3{background:#ff7f0e}.k4{background:#ffbb78}.k5{background:#2ca02c}.k6{background:#98df8a}.k7{background:#d62728}.k8{background:#ff9896}.k9{background:#9467bd}.k10{background:#c5b0d5}.k11{background:#8c564b}
.outside{flex:1;background:#e6e6e6}
.tabs{height:8px;background:#e6e6e6;margin-top:1px;border-top:1px solid #bdbabd;display:flex;box-shadow:0 -1px #fff}
.t1{width:131px;border-right:1px solid #444}.t2{width:73px;background:#f7f3f7;border-right:1px solid #bbb}.t3{width:102px;background:#fff;border-right:1px solid #444}
.showme{position:absolute;left:1180px;top:41px;width:170px;height:411px;border:1px solid #949694;border-radius:6px 0 0 0;background:#fff;overflow:hidden}
.showme header{height:23px;background:#e6eef6;border-bottom:1px solid #b6bac2;display:flex;align-items:center}
.showme header span{margin-left:3px;line-height:22px;letter-spacing:-.4px;padding-top:2px}
.thumbs{display:grid;grid-template-columns:repeat(3,42px);grid-auto-rows:28px;gap:6px 11px;padding:6px 0 0 9px;width:170px}
.thumbs svg{width:42px;height:28px;overflow:visible}
.sel{filter:drop-shadow(0 0 1px #80c0ff)}
.bd{fill:none;stroke:#aaa8aa}
.bd.off{stroke:#dfdfdf}
.line{fill:none;stroke-width:1.200}
.digits{font-family:"DejaVu Sans Mono",monospace;fill:#333;font-stretch:normal}
.bold{font-weight:700}
.hint{padding:7px 0 0 7px;line-height:17px;font-family:"Noto Sans",sans-serif;font-stretch:normal;font-size:11px;white-space:nowrap}
.hint b{letter-spacing:-.2px}
.hint .in{padding-left:6px}
.hint mark{color:#000;background:#dceeff}
.hint .mea{background:#d4f2dc}
.activate{position:absolute;left:1063px;top:618px;color:#b7b7b7;font-family:"Open Sans",sans-serif;font-stretch:normal;white-space:nowrap}
.activate p{font-size:19px;line-height:25px}
.activate small{display:block;font-size:14px;line-height:21px}
.vscroll{width:17px;height:679px;background:#f0f0f0;display:flex;flex-direction:column;border-left:1px solid #fff}
.vthumb{height:568px;width:15px;background:#cdcdcd}
.down{margin-top:auto}
.hscroll{height:16px;background:#f0f0f0;display:flex}
.hthumb{width:1266px;height:15px;background:#cdcdcd}
.taskbar{height:40px;display:flex;background:#030303;color:#fff;font-family:"Open Sans","Noto Sans",sans-serif;font-stretch:normal}
.search{width:344px;background:#333;display:flex;align-items:center;color:#a5a5a5;font-size:14px;letter-spacing:-.1px}
.mic{margin-left:auto}
.apps{display:flex}
.apps svg{width:49px;height:40px}
.tray{margin-left:auto;display:flex;align-items:center}
.batt{width:48px;height:24px;border:2px solid #fff;background:#555;padding:1px;margin-right:4px;position:relative;display:flex;text-shadow:1px 1px #064}
.batt::after{content:"";position:absolute;right:-5px;top:4px;width:4px;height:12px;background:#fff}
.batt span{flex:1;background:linear-gradient(90deg,#08c766 36px,#c7f1dc 36px);font-size:13px;line-height:18px;padding-left:8px;letter-spacing:-.4px}
.clock{width:73px;display:flex;flex-direction:column;align-items:center;font-size:12px;line-height:18px;letter-spacing:-.4px;padding-right:4px}
```
